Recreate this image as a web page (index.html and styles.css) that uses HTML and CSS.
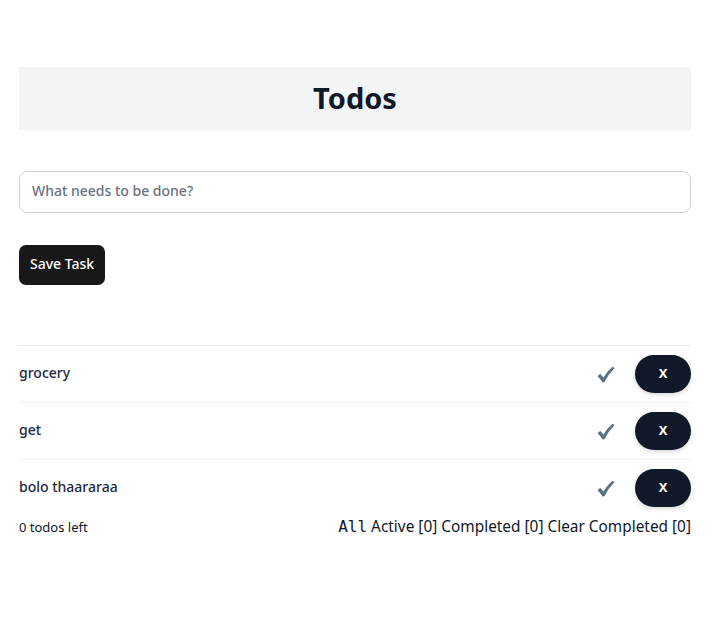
FILE: index.html
```html
<!DOCTYPE html>
<html lang="en">
<head>
<meta charset="utf-8">
<title>Todos</title>
<link rel="stylesheet" href="styles.css">
</head>
<body>
<main class="app">
  <header class="title-bar"><h1>Todos</h1></header>
  <form class="new-todo">
    <input class="new-todo-input" type="text" placeholder="What needs to be done?">
    <div><button type="button" class="save-btn">Save Task</button></div>
  </form>
  <ul class="todo-list">
    <li class="todo-item">
      <span class="todo-text">grocery</span>
      <span class="todo-actions">
        <svg class="check" viewBox="0 0 18 17" width="18" height="17"><path d="M0.6 10.2 Q2 8.6 3.4 8 L6.4 11.4 Q10.4 5.2 15.4 0.8 L17.6 2 Q11.6 8 7.4 16.2 L5.6 16.4 Q3.4 13 0.6 10.2 Z" fill="#587483"/></svg>
        <button type="button" class="del-btn">X</button>
      </span>
    </li>
    <li class="todo-item">
      <span class="todo-text">get</span>
      <span class="todo-actions">
        <svg class="check" viewBox="0 0 18 17" width="18" height="17"><path d="M0.6 10.2 Q2 8.6 3.4 8 L6.4 11.4 Q10.4 5.2 15.4 0.8 L17.6 2 Q11.6 8 7.4 16.2 L5.6 16.4 Q3.4 13 0.6 10.2 Z" fill="#587483"/></svg>
        <button type="button" class="del-btn">X</button>
      </span>
    </li>
    <li class="todo-item">
      <span class="todo-text">bolo thaararaa</span>
      <span class="todo-actions">
        <svg class="check" viewBox="0 0 18 17" width="18" height="17"><path d="M0.6 10.2 Q2 8.6 3.4 8 L6.4 11.4 Q10.4 5.2 15.4 0.8 L17.6 2 Q11.6 8 7.4 16.2 L5.6 16.4 Q3.4 13 0.6 10.2 Z" fill="#587483"/></svg>
        <button type="button" class="del-btn">X</button>
      </span>
    </li>
  </ul>
  <footer class="footer">
    <span class="count">0 todos left</span>
    <span class="filters"><code class="mono">All</code> Active [0] Completed [0] Clear Completed [0]</span>
  </footer>
</main>
</body>
</html>
```

FILE: styles.css
```css
* { box-sizing: border-box; }
html, body { margin: 0; padding: 0; background: #ffffff; }
body {
  font-family: "Noto Sans", "Open Sans", sans-serif;
  color: #111827;
}
.app {
  width: 672px;
  margin-left: 19px;
  padding-top: 67px;
}
.title-bar {
  background: #f3f4f6;
  height: 63px;
  display: flex;
  align-items: center;
  justify-content: center;
}
.title-bar h1 {
  margin: 0 0 2px;
  font-size: 29px;
  font-weight: 700;
  color: #111827;
  line-height: 1;
}
.new-todo {
  margin-top: 41px;
  display: flex;
  flex-direction: column;
  gap: 32px;
}
.new-todo-input {
  width: 100%;
  height: 42px;
  border: 1px solid #d1d5db;
  border-radius: 8px;
  padding: 0 12px 3px;
  font-family: inherit;
  font-size: 14px;
  font-weight: 500;
  color: #111827;
  outline: none;
}
.new-todo-input::placeholder { color: #6b7280; }
.save-btn {
  height: 40px;
  padding: 0 11px 3px;
  background: #18181b;
  color: #ffffff;
  border: none;
  border-radius: 7px;
  font-family: inherit;
  font-size: 14px;
  font-weight: 500;
}
.todo-list {
  list-style: none;
  margin: 60px 0 0;
  padding: 0;
}
.todo-item {
  height: 57px;
  border-top: 1px solid #e5e7eb;
  display: flex;
  align-items: center;
  justify-content: space-between;
}
.todo-item + .todo-item { border-top-color: #f1f2f4; }
.todo-text {
  font-size: 14px;
  font-weight: 500;
  color: #1f2937;
  margin-bottom: 4px;
}
.todo-actions {
  display: flex;
  align-items: center;
  gap: 20px;
}
.check { display: block; }
.del-btn {
  width: 56px;
  height: 38px;
  padding: 0 0 2px;
  border: none;
  border-radius: 19px;
  background: #111827;
  color: #ffffff;
  font-family: inherit;
  font-size: 13px;
  font-weight: 700;
  box-shadow: 0 2px 4px rgba(0,0,0,0.15);
}
.footer {
  display: flex;
  justify-content: space-between;
  align-items: center;
}
.count { font-size: 13px; color: #111827; }
.filters { font-size: 15.4px; color: #111827; }
.mono { font-family: "DejaVu Sans Mono", monospace; font-size: 16px; }
```
